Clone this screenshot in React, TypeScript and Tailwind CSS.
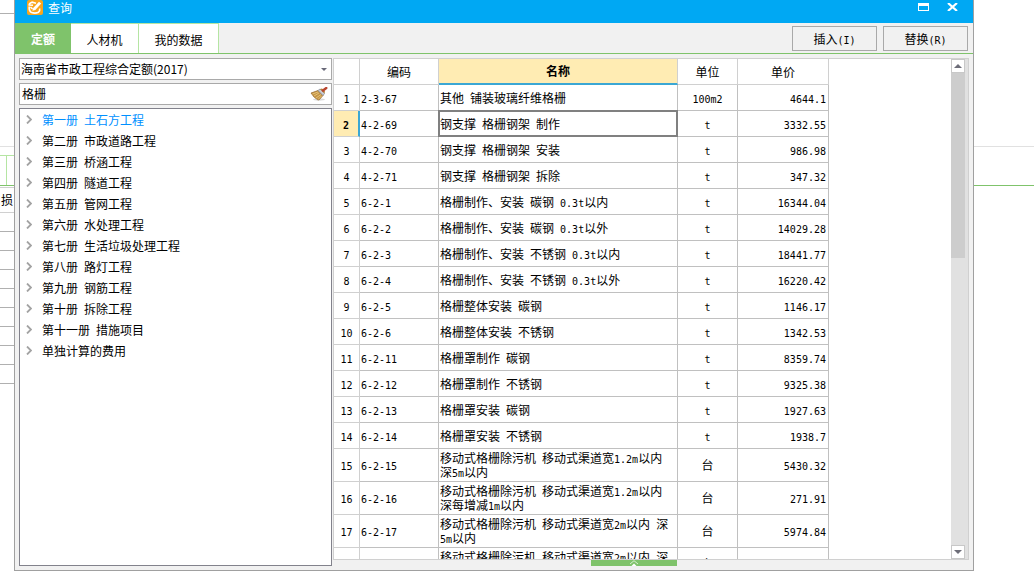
import { useState } from 'react';

type Row = { code: string; name: string; unit: string; price: string }

const volumes = [
  '第一册 土石方工程',
  '第二册 市政道路工程',
  '第三册 桥涵工程',
  '第四册 隧道工程',
  '第五册 管网工程',
  '第六册 水处理工程',
  '第七册 生活垃圾处理工程',
  '第八册 路灯工程',
  '第九册 钢筋工程',
  '第十册 拆除工程',
  '第十一册 措施项目',
  '单独计算的费用',
]

const rows: Row[] = [
  { code: '2-3-67', name: '其他 铺装玻璃纤维格栅', unit: '100m2', price: '4644.1' },
  { code: '4-2-69', name: '钢支撑 格栅钢架 制作', unit: 't', price: '3332.55' },
  { code: '4-2-70', name: '钢支撑 格栅钢架 安装', unit: 't', price: '986.98' },
  { code: '4-2-71', name: '钢支撑 格栅钢架 拆除', unit: 't', price: '347.32' },
  { code: '6-2-1', name: '格栅制作、安装 碳钢 0.3t以内', unit: 't', price: '16344.04' },
  { code: '6-2-2', name: '格栅制作、安装 碳钢 0.3t以外', unit: 't', price: '14029.28' },
  { code: '6-2-3', name: '格栅制作、安装 不锈钢 0.3t以内', unit: 't', price: '18441.77' },
  { code: '6-2-4', name: '格栅制作、安装 不锈钢 0.3t以外', unit: 't', price: '16220.42' },
  { code: '6-2-5', name: '格栅整体安装 碳钢', unit: 't', price: '1146.17' },
  { code: '6-2-6', name: '格栅整体安装 不锈钢', unit: 't', price: '1342.53' },
  { code: '6-2-11', name: '格栅罩制作 碳钢', unit: 't', price: '8359.74' },
  { code: '6-2-12', name: '格栅罩制作 不锈钢', unit: 't', price: '9325.38' },
  { code: '6-2-13', name: '格栅罩安装 碳钢', unit: 't', price: '1927.63' },
  { code: '6-2-14', name: '格栅罩安装 不锈钢', unit: 't', price: '1938.7' },
  { code: '6-2-15', name: '移动式格栅除污机 移动式渠道宽1.2m以内 深5m以内', unit: '台', price: '5430.32' },
  { code: '6-2-16', name: '移动式格栅除污机 移动式渠道宽1.2m以内 深每增减1m以内', unit: '台', price: '271.91' },
  { code: '6-2-17', name: '移动式格栅除污机 移动式渠道宽2m以内 深5m以内', unit: '台', price: '5974.84' },
  { code: '6-2-18', name: '移动式格栅除污机 移动式渠道宽2m以内 深每增减1m以内', unit: '台', price: '298.72' },
]

// Latin runs are half the width of a Chinese character
function Mixed({ text }: { text: string }) {
  return (
    <>
      {text.split(/([\x20-\x7e]+)/).map((part, i) =>
        i % 2 ? (
          <span key={i} className="font-['DejaVu_Sans_Mono',monospace] text-[10px] leading-none">{part}</span>
        ) : part
      )}
    </>
  )
}

function AppIcon() {
  return (
    <svg viewBox="0 0 16 16" className="w-4 h-4 flex-shrink-0" aria-hidden="true">
      <rect width="16" height="15" rx="2" fill="#f9a51c" />
      <path d="M9 3.2 5 2.2Q2 3.2 2.2 5L6 5.2" fill="none" stroke="#fff" strokeWidth="1.6" />
      <path d="M2.2 6.5Q1.8 11 4.5 12.6 8.5 13.8 11.5 12.2 13.2 10.5 12.6 8.5" fill="none" stroke="#fff" strokeWidth="1.6" />
      <path d="M6.2 8 12 1.8 14.2 3.6 8.4 9.9 5.4 10.8Z" fill="#fff" />
      <path d="M3.4 7.2 5.6 8.8" stroke="#fff" strokeWidth="1.6" />
    </svg>
  )
}

function BroomIcon() {
  return (
    <svg viewBox="0 0 18 14" className="w-[18px] h-[14px]" aria-hidden="true">
      <ellipse cx="9" cy="12.5" rx="6" ry="1.2" fill="#d9d9d9" />
      <path d="M1 6 8 3.5 13 8.5 9 13 7 12.5 5.5 11 4 10Z" fill="#c69545" stroke="#94662a" strokeWidth=".7" />
      <path d="M2.5 7 8 5M4 9 9 6M6 11 11 7.5M8 12.5 11.5 9" stroke="#eccb83" strokeWidth=".8" />
      <path d="M8 3.5 10 2 14.5 6.5 13 8.5Z" fill="#c9ccd4" stroke="#80838c" strokeWidth=".7" />
      <path d="M10 2 12 1.5 15 4.5 14.5 6.5Z" fill="#b98033" />
      <path d="M13 3.5 16.3 1" stroke="#b8442f" strokeWidth="2.4" strokeLinecap="round" />
    </svg>
  )
}

function Arrow({ up = false }: { up?: boolean }) {
  return (
    <svg viewBox="0 0 8 4" className="w-2 h-1" aria-hidden="true">
      <path d={up ? 'M0 4 4 0 8 4Z' : 'M0 0H8L4 4Z'} fill="#6d6d78" />
    </svg>
  )
}

function TitleBar() {
  return (
    <header className="flex items-start h-[23px] pl-3 pr-[15px] bg-[#00a8f3] text-white">
      <AppIcon />
      <h1 className="ml-[5px] flex-1 leading-4">查询</h1>
      <button aria-label="最大化" className="mt-[3px]">
        <svg viewBox="0 0 11 8" className="w-[11px] h-2">
          <path d="M0 0H11V8H0ZM1 3V7H10V3Z" fill="#fff" fillRule="evenodd" />
        </svg>
      </button>
      <button aria-label="关闭" className="mt-[3px] ml-[18px]">
        <svg viewBox="0 0 11 8" className="w-[11px] h-2">
          <path d="M1 0 10 8M10 0 1 8" stroke="#fff" strokeWidth="2.2" />
        </svg>
      </button>
    </header>
  )
}

function Sidebar() {
  const [keyword, setKeyword] = useState('格栅')
  const [active, setActive] = useState(0)

  return (
    <aside className="flex flex-col gap-[3px] w-[313px] flex-shrink-0">
      <div className="relative">
        <select aria-label="定额库" className="block w-full h-[22px] pl-px pr-5 appearance-none border border-[#a9a9a9] bg-white">
          <option>海南省市政工程综合定额(2017)</option>
        </select>
        <svg viewBox="0 0 6 3" className="absolute right-[5px] top-[10px] w-[6px] h-[3px] pointer-events-none">
          <path d="M0 0H6L3 3Z" fill="#686878" />
        </svg>
      </div>
      <div className="flex items-center h-[22px] pr-[3px] border border-[#a9a9a9] bg-white">
        <input
          aria-label="关键字"
          value={keyword}
          onChange={(e) => setKeyword(e.target.value)}
          className="flex-1 min-w-0 pl-[2px] outline-none"
        />
        <button aria-label="清除" onClick={() => setKeyword('')}>
          <BroomIcon />
        </button>
      </div>
      <ul className="flex-1 min-h-0 overflow-hidden border border-[#82828c] bg-white">
        {volumes.map((name, i) => (
          <li key={name}>
            <button
              onClick={() => setActive(i)}
              className={`flex items-center w-full h-[21px] pl-[6px] gap-[10px] text-left ${i === active ? 'text-[#0090ff]' : ''}`}
            >
              <svg viewBox="0 0 6 9" className="w-[6px] h-[9px]" aria-hidden="true">
                <path d="M1 .5 5 4.5 1 8.5" fill="none" stroke="#a3a3a3" strokeWidth="1.8" />
              </svg>
              <span><Mixed text={name} /></span>
            </button>
          </li>
        ))}
      </ul>
    </aside>
  )
}

function Grid() {
  const [selected, setSelected] = useState(1)
  const head = 'border-r border-b border-[#d0d0d0] font-normal'
  const cell = 'border-r border-b border-[#c0c0c0]'

  return (
    <div className="flex flex-1 min-h-0 overflow-hidden border border-[#d0d0d0] bg-white">
      <div className="flex-1 min-w-0 overflow-hidden">
        <table className="table-fixed w-[495px] border-separate border-spacing-0 leading-[14px]">
          <colgroup>
            <col className="w-[26px]" />
            <col className="w-[79px]" />
            <col className="w-[239px]" />
            <col className="w-[60px]" />
            <col className="w-[91px]" />
          </colgroup>
          <thead>
            <tr className="h-[26px]">
              <th className={head}></th>
              <th className={head}>编码</th>
              <th className="border-r border-r-[#d0d0d0] border-b-2 border-b-[#3ba7d4] bg-[#ffecb3] font-bold">名称</th>
              <th className={head}>单位</th>
              <th className={head}>单价</th>
            </tr>
          </thead>
          <tbody>
            {rows.map((row, i) => (
              <tr key={row.code} onClick={() => setSelected(i)} className={i < 14 ? 'h-[26px]' : 'h-[33px]'}>
                <th
                  scope="row"
                  className={i === selected
                    ? 'border-r-2 border-r-[#3ba7d4] border-b border-b-[#d0d0d0] bg-[#ffecb3] font-bold'
                    : head}
                >
                  <Mixed text={String(i + 1)} />
                </th>
                <td className={`${cell} pl-px`}><Mixed text={row.code} /></td>
                <td className={`${cell} relative pl-px`}>
                  <Mixed text={row.name} />
                  {i === selected && <span className="absolute -inset-px border-2 border-[#808080]" />}
                </td>
                <td className={`${cell} text-center`}><Mixed text={row.unit} /></td>
                <td className={`${cell} pr-[2px] text-right`}><Mixed text={row.price} /></td>
              </tr>
            ))}
          </tbody>
        </table>
      </div>
      <div className="flex flex-col w-[17px] pr-[3px] bg-[#e1e1e1]">
        <button aria-label="向上滚动" className="flex items-center justify-center h-[14px] border border-[#c8c8c8] bg-white">
          <Arrow up />
        </button>
        <div className="h-[185px] bg-[#cdcdcd]" />
        <div className="flex-1" />
        <button aria-label="向下滚动" className="flex items-center justify-center h-[14px] border border-[#c8c8c8] bg-white">
          <Arrow />
        </button>
      </div>
    </div>
  )
}

function QueryWindow() {
  const action = 'w-[85px] h-[25px] border border-[#a9a9a9] bg-[#f1f1f1]'

  return (
    <main className="flex flex-col flex-1 min-w-0 mb-1 border-x border-b border-[#a0a0a0] bg-[#f1f1f1]">
      <TitleBar />
      <nav className="flex h-[31px] border-b border-[#7fc36b]">
        <button className="w-14 pt-[2px] bg-[#7fc36b] text-white font-bold">定额</button>
        <button className="w-[68px] pt-[2px] border-t border-r border-[#b5e5a3] bg-white">人材机</button>
        <button className="w-20 pt-[2px] border-t border-r border-[#b5e5a3] bg-white">我的数据</button>
        <div className="flex flex-1 justify-end gap-[6px] pt-[3px] pr-[5px]">
          <button className={action}><Mixed text="插入(I)" /></button>
          <button className={action}><Mixed text="替换(R)" /></button>
        </div>
      </nav>
      <div className="flex flex-1 min-h-0 gap-px pt-1 px-1 pb-1">
        <Sidebar />
        <section className="flex flex-col flex-1 min-w-0">
          <Grid />
          <button aria-label="展开" className="flex justify-center w-[86px] h-[6px] ml-[258px] bg-[#7fc36b]">
            <svg viewBox="0 0 10 6" className="w-[10px] h-[6px]">
              <path d="M1 4 5 .7 9 4" fill="none" stroke="#d9efd2" />
              <path d="M2.5 6 5 3.5 7.5 6Z" fill="#fff" />
            </svg>
          </button>
        </section>
      </div>
    </main>
  )
}

export default function App() {
  return (
    <div className="flex h-screen overflow-hidden bg-white text-black text-xs font-['Noto_Sans_CJK_SC',sans-serif]">
      {/* sheet behind the window, left side */}
      <div className="w-[14px] flex-shrink-0 overflow-hidden">
        <div className="h-[14px] border-b border-[#b0b0b0]" />
        <div className="h-[133px] border-b border-[#e1e1e1]" />
        <div className="flex h-[31px] mt-2 border-t border-t-[#b5e5a3] border-b border-b-[#7fc36b]">
          <div className="w-[7px] border-r border-[#b5e5a3]" />
        </div>
        <div className="h-[26px] pl-px mt-px border-y border-[#d0d0d0] leading-6 whitespace-nowrap">损</div>
        {Array.from({ length: 9 }, (_, i) => (
          <div key={i} className="h-[19px] border-b border-[#b0b0b0]" />
        ))}
      </div>
      <QueryWindow />
      {/* right side */}
      <div className="w-[60px] flex-shrink-0">
        <div className="h-[147px] border-b border-[#e1e1e1]" />
        <div className="h-[39px] border-b border-[#7fc36b]" />
      </div>
    </div>
  )
}
